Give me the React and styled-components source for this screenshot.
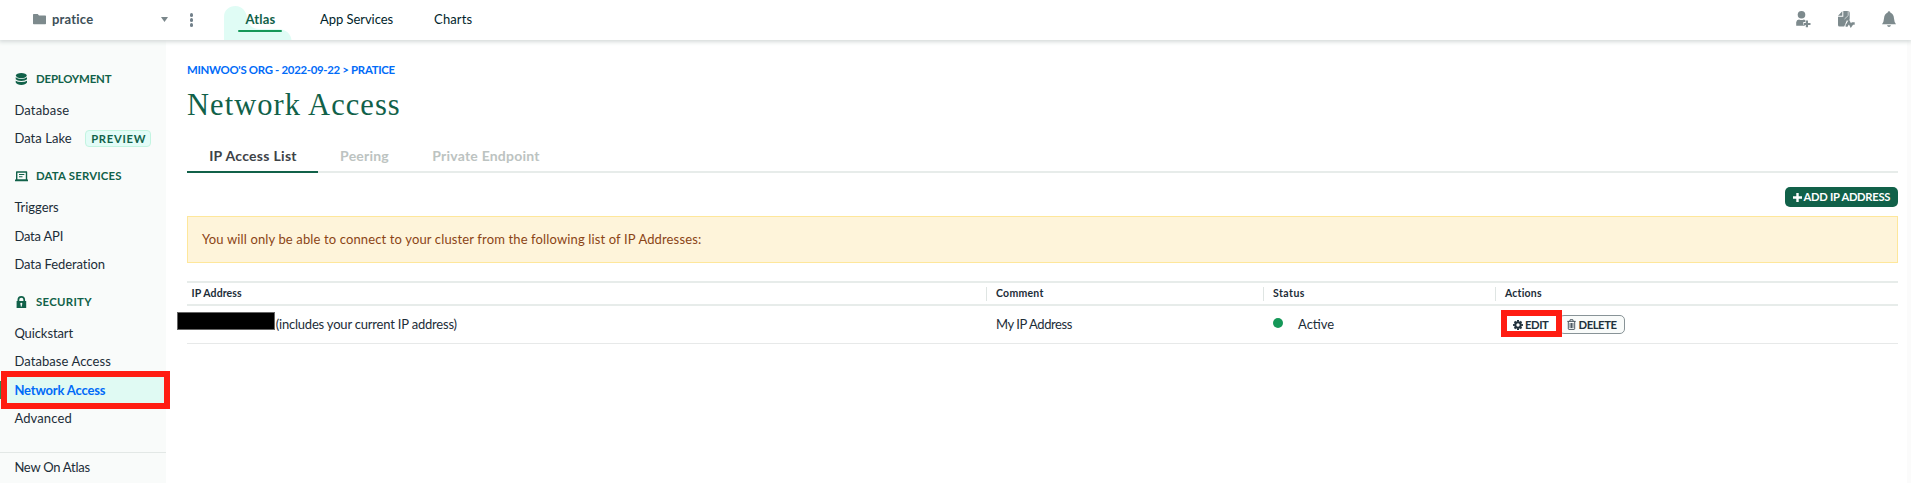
import React from 'react';
import styled, { createGlobalStyle, css } from 'styled-components';

const GlobalStyle = createGlobalStyle`
  *, *::before, *::after { box-sizing: border-box; }
  body { margin: 0; background: #fff; color: #1c2d38; font: 13px/16px Lato, "Open Sans", sans-serif; overflow: hidden; }
  h1 { margin: 0; padding: 0; }
  svg { display: block; flex: none; }
`;

const Label = styled.span`
  letter-spacing: ${({ $track = 0 }) => $track}px;
  white-space: nowrap;
`;

const Page = styled.div`
  height: 483px;
  display: flex;
  flex-direction: column;
  overflow: hidden;
`;

const TopBar = styled.header`
  position: relative;
  z-index: 2;
  display: flex;
  flex: 0 0 40px;
  background: #fff;
  box-shadow: 0 1px 4px 1px #d5dbda;
`;

const ProjectPicker = styled.div`
  display: flex;
  align-items: center;
  width: 168px;
  height: 38px;
  padding-left: 33px;
  color: #3d4f58;
  font-weight: 700;
`;

const ProjectName = styled(Label)`
  margin-left: 6px;
  flex: 1;
`;

const MoreMenu = styled.div`
  display: flex;
  flex-direction: column;
  gap: 1.5px;
  width: 56px;
  padding: 13px 0 0 21.5px;
`;

const MoreDot = styled.i`
  width: 3.5px;
  height: 3.5px;
  border-radius: 50%;
  background: #72808a;
`;

const ProductNav = styled.nav`
  display: flex;
  flex: 1;
`;

const Product = styled.a`
  position: relative;
  display: flex;
  align-items: center;
  height: 38px;
  margin-left: ${({ $gap }) => $gap}px;
  color: #001e2b;
  ${({ $active }) => $active && css`
    width: 67px;
    height: 40px;
    padding: 0 0 2px 21.5px;
    color: #116149;
    font-weight: 700;
    &::after {
      content: '';
      position: absolute;
      left: 14px;
      bottom: 8px;
      width: 44px;
      height: 2px;
      border-radius: 1px;
      background: #159858;
    }
  `}
`;

const ProductShape = styled.svg`
  position: absolute;
  left: 0;
  top: 6px;
`;

const ProductLabel = styled(Label)`
  position: relative;
`;

const Tools = styled.div`
  display: flex;
  padding: 11px 15px 0 0;
  gap: 27px;
`;

const Body = styled.div`
  display: flex;
  flex: 1;
  min-height: 0;
`;

const Sidebar = styled.aside`
  display: flex;
  flex-direction: column;
  flex: 0 0 166px;
  padding-top: 23.6px;
  background: #f9fbfa;
`;

const Section = styled.section`
  margin-bottom: 9px;
`;

const SectionTitle = styled.div`
  display: flex;
  align-items: center;
  height: 31.6px;
  padding: 0 0 1px 15px;
  color: #116149;
  font-size: 11.4px;
  font-weight: 700;
`;

const SectionIcon = styled.span`
  width: 21px;
`;

const SideLink = styled.a`
  position: relative;
  display: flex;
  align-items: center;
  height: 28.4px;
  padding: 1px 0 0 14.4px;
  ${({ $active }) => $active && css`
    color: #016bf8;
    font-weight: 700;
    &::before {
      content: '';
      position: absolute;
      left: 0;
      top: 6px;
      width: 3px;
      height: 18px;
      background: #2c8b50;
    }
  `}
`;

const SideLabel = styled(Label)`
  position: relative;
  z-index: 2;
`;

const SideMark = styled.span`
  position: absolute;
  left: 1px;
  top: -4px;
  width: 168.5px;
  height: 38px;
  border: 6.5px solid #ff1d12;
  background: #e0faf3;
  z-index: 1;
`;

const Preview = styled(Label)`
  margin-left: 13.6px;
  width: 66px;
  height: 17px;
  padding-left: 1px;
  border: 1px solid #c3f4e1;
  border-radius: 4px;
  background: #e3fcf7;
  color: #116149;
  font-size: 11.2px;
  font-weight: 700;
  line-height: 15px;
  text-align: center;
`;

const SideFooter = styled.div`
  margin-top: 10.8px;
  border-top: 1px solid #e3e8e6;
`;

const Main = styled.main`
  flex: 1;
  padding: 22px 9px 0 21px;
  border-right: 4px solid #fbfbfb;
`;

const Breadcrumb = styled.div`
  height: 16px;
  color: #016bf8;
  font-size: 11.4px;
  font-weight: 700;
`;

const Title = styled.h1`
  height: 67px;
  padding-top: 9px;
  color: #116149;
  font: 400 30.5px/36px "Liberation Serif", serif;
`;

const Tabs = styled.div`
  display: flex;
  height: 28px;
  border-bottom: 2px solid #e7ecea;
`;

const Tab = styled.a`
  display: flex;
  justify-content: center;
  width: ${({ $width }) => $width}px;
  height: 28px;
  padding: 3px 0 0 1px;
  font-size: 14px;
  font-weight: 700;
  color: ${({ $active }) => ($active ? '#3d4247' : '#bcc3c1')};
  border-bottom: 2px solid ${({ $active }) => ($active ? '#116149' : 'transparent')};
`;

const ActionBar = styled.div`
  display: flex;
  justify-content: flex-end;
  height: 43px;
  padding-top: 14px;
`;

const AddButton = styled.button`
  display: flex;
  align-items: center;
  gap: 2px;
  width: 113px;
  height: 20px;
  padding: 0 0 0 7.5px;
  border: 0;
  border-radius: 5px;
  background: #116149;
  color: #fff;
  font: 700 11.2px/16px Lato, sans-serif;
`;

const Banner = styled.div`
  display: flex;
  align-items: center;
  height: 47px;
  padding: 0 0 2px 14px;
  border: 1px solid #fee79b;
  background: #fef4da;
  color: #8b4416;
`;

const AccessTable = styled.div`
  margin-top: 18px;
`;

const Row = styled.div`
  display: grid;
  grid-template-columns: 799px 277px 232px 1fr;
`;

const HeadRow = styled(Row)`
  height: 25px;
  align-items: center;
  border: 2px solid #e7ecea;
  border-width: 2px 0;
  font-size: 10.5px;
  font-weight: 700;
`;

const HeadCell = styled.div`
  height: 14px;
  line-height: 13px;
  padding-left: ${({ $first }) => ($first ? 4.5 : 9)}px;
  border-left: ${({ $first }) => ($first ? 0 : '1px solid #dfe5e3')};
`;

const DataRow = styled(Row)`
  height: 38px;
  border-bottom: 1px solid #e7e9e9;
`;

const Cell = styled.div`
  position: relative;
  display: flex;
  align-items: center;
  padding: 0 0 2px 10px;
`;

const IpCell = styled(Cell)`
  padding-left: 0;
`;

const Redaction = styled.span`
  width: 98px;
  height: 18px;
  margin: 0 1px 5px -10.3px;
  border: 1px solid #666;
  background: #000;
`;

const StatusDot = styled.i`
  width: 10px;
  height: 10px;
  margin: 0 15px 1px 0;
  border-radius: 50%;
  background: #159858;
`;

const RowButton = styled.button`
  display: flex;
  align-items: center;
  gap: 2.5px;
  width: ${({ $width }) => $width}px;
  height: 19px;
  margin: 2px 0 0 ${({ $pull = 0 }) => $pull}px;
  padding: 0 0 0 ${({ $inset }) => $inset}px;
  border: 1px solid #889397;
  border-radius: 5px;
  background: #f9fbfa;
  color: #21313c;
  font: 700 11.3px/16px Lato, sans-serif;
`;

const EditButton = styled(RowButton)`
  border-color: transparent;
  background: #fff;
`;

const EditMark = styled.span`
  position: absolute;
  left: 6px;
  top: 4px;
  width: 60.5px;
  height: 27px;
  border: 6.5px solid #ff1d12;
`;

const Svg = ({ w, h, children }) => (
  <svg width={w} height={h} viewBox={`0 0 ${w} ${h}`} fill="currentColor">{children}</svg>
);

const Folder = () => <Svg w={13} h={12}><path d="M0 1.7Q0 1 .7 1H4.7L6 2.5H12.3Q13 2.5 13 3.2V10.6Q13 11.2 12.3 11.2H.7Q0 11.2 0 10.6Z" fill="#7d8a8d" /></Svg>;
const Caret = () => <Svg w={7} h={5}><path d="M0 0H7L3.5 5Z" fill="#7a878b" /></Svg>;

const Stack = () => (
  <Svg w={13} h={12}>
    <ellipse cx="6.3" cy="2.6" rx="5.4" ry="2.6" />
    <path d="M.7 4.2Q2.5 5.9 6.3 5.9T12 4.2V6.2Q10.5 8 6.3 8T.7 6.2Z" />
    <path d="M.7 7.8Q2.5 9.1 6.3 9.1T12 7.8V9.6Q10.5 12 6.3 12T.7 9.6Z" />
  </Svg>
);

const Laptop = () => (
  <Svg w={13} h={11}>
    <path fillRule="evenodd" d="M1 1Q1 .3 1.7.3H11.5Q12.2.3 12.2 1V8.6H13V10.2H0V8.6H1ZM2.4 1.7V8.3H10.8V1.7Z" />
    <path d="M4 3H9.3V4.1H4ZM4 5.2H7.5V6.2H4Z" />
  </Svg>
);

const Lock = () => (
  <Svg w={13} h={12}>
    <path fillRule="evenodd" d="M2.5 5V3.8a3.8 3.8 0 0 1 7.6 0V5H11.2V12H1.6V5ZM4.3 5H8.4V3.8a2.05 2.05 0 0 0-4.1 0ZM6.3 6.8a1.1 1.1 0 0 0-.6 2V10.4H6.9V8.8a1.1 1.1 0 0 0-.6-2Z" />
  </Svg>
);

const InviteUser = () => (
  <Svg w={15} h={17}>
    <g fill="#7d8a8d">
      <circle cx="5.5" cy="3.8" r="3.8" />
      <path d="M.2 14.7V11.2Q.5 8.6 3 8.5Q5.5 9.6 8 8.5L9.3 9.2V11H7.3V13.8H8.8V14.7Z" />
      <path d="M9.8 9.4H12V12H14.5V14H12V16.3H9.8V14H7.9V12H9.8Z" />
    </g>
  </Svg>
);

const Activity = () => (
  <Svg w={17} h={17}>
    <g fill="#7d8a8d">
      <path d="M0 4.7L4.3.2V4.7Z" />
      <path d="M5.3 0H10Q11.7 0 11.7 1.7V8.2L10.2 10L8.9 9.2L6.2 15.6H1.5Q0 15.6 0 14V5.8H5.3Z" />
      <path d="M10.2.3V4.6L6.5 8" fill="none" stroke="#fff" strokeWidth=".6" />
      <path d="M7.6 14.5H8.8L10.9 10.8L12.9 14.7L14.4 12.5H16.7" fill="none" stroke="#7d8a8d" strokeWidth="2.4" />
    </g>
  </Svg>
);

const Bell = () => (
  <Svg w={14} h={17}>
    <path d="M5.7 1.5a1.3 1.3 0 0 1 2.6 0Q11.8 3 12 7.5Q12.2 11 14 13.2H0Q1.8 11 2 7.5Q2.2 3 5.7 1.5ZM5 14.2H9Q8.5 16 7 16T5 14.2Z" fill="#7d8a8d" />
  </Svg>
);

const Plus = () => <Svg w={9} h={9}><path d="M3.3 0H5.7V3.3H9V5.7H5.7V9H3.3V5.7H0V3.3H3.3Z" /></Svg>;

const Gear = () => (
  <svg width="10" height="10" viewBox="-5 -5 10 10">
    <circle r="2.7" fill="none" stroke="currentColor" strokeWidth="2" />
    {[0, 45, 90, 135].map((a) => (
      <path key={a} d="M-1-4.9H1V-3.2H-1ZM-1 4.9H1V3.2H-1Z" fill="currentColor" transform={`rotate(${a})`} />
    ))}
  </svg>
);

const Trash = () => (
  <svg width="9" height="11" viewBox="0 0 9 11" fill="none" stroke="currentColor" strokeWidth=".8">
    <path d="M.3 2.4H8.7M2.8 2.2L3.2.7H5.8L6.2 2.2M1.3 2.6V9.6Q1.3 10.4 2 10.4H7Q7.7 10.4 7.7 9.6V2.6M3.1 4V9M4.5 4V9M5.9 4V9" />
  </svg>
);

const sections = [
  { title: 'DEPLOYMENT', track: -0.15, icon: <Stack />, links: [['Database', 0.18], ['Data Lake', 0.05, 'preview']] },
  { title: 'DATA SERVICES', track: 0.18, icon: <Laptop />, links: [['Triggers', -0.05], ['Data API', -0.2], ['Data Federation', -0.08]] },
  { title: 'SECURITY', track: 0.3, icon: <Lock />, links: [['Quickstart', -0.1], ['Database Access', 0.08], ['Network Access', -0.17, 'active'], ['Advanced', 0.12]] },
];

export default function App() {
  return (
    <Page>
      <GlobalStyle />
      <TopBar>
        <ProjectPicker>
          <Folder />
          <ProjectName $track={0.2}>pratice</ProjectName>
          <Caret />
        </ProjectPicker>
        <MoreMenu><MoreDot /><MoreDot /><MoreDot /></MoreMenu>
        <ProductNav>
          <Product $active $gap={0}>
            <ProductShape width="68" height="34" viewBox="0 0 68 34">
              <path d="M0 34V11C0 4 5 0 11.5 0S22 5 23 11C24 19 28 23 36 23H54C62 23 67 28 67.5 34Z" fill="#e0fcf5" />
            </ProductShape>
            <ProductLabel $track={0.2}>Atlas</ProductLabel>
          </Product>
          <Product $gap={29}><Label $track={-0.05}>App Services</Label></Product>
          <Product $gap={41}><Label $track={0.1}>Charts</Label></Product>
        </ProductNav>
        <Tools><InviteUser /><Activity /><Bell /></Tools>
      </TopBar>
      <Body>
        <Sidebar>
          {sections.map(({ title, track, icon, links }) => (
            <Section key={title}>
              <SectionTitle><SectionIcon>{icon}</SectionIcon><Label $track={track}>{title}</Label></SectionTitle>
              {links.map(([name, spacing, kind]) => (
                <SideLink key={name} $active={kind === 'active'}>
                  {kind === 'active' && <SideMark />}
                  <SideLabel $track={spacing}>{name}</SideLabel>
                  {kind === 'preview' && <Preview $track={0.75}>PREVIEW</Preview>}
                </SideLink>
              ))}
            </Section>
          ))}
          <SideFooter><SideLink><Label $track={-0.25}>New On Atlas</Label></SideLink></SideFooter>
        </Sidebar>
        <Main>
          <Breadcrumb><Label $track={-0.3}>MINWOO'S ORG - 2022-09-22 &gt; PRATICE</Label></Breadcrumb>
          <Title><Label $track={1.05}>Network Access</Label></Title>
          <Tabs>
            <Tab $active $width={131}><Label $track={0.3}>IP Access List</Label></Tab>
            <Tab $width={92}><Label $track={0.2}>Peering</Label></Tab>
            <Tab $width={151}><Label $track={0.22}>Private Endpoint</Label></Tab>
          </Tabs>
          <ActionBar><AddButton><Plus /><Label $track={-0.27}>ADD IP ADDRESS</Label></AddButton></ActionBar>
          <Banner><Label $track={0.135}>You will only be able to connect to your cluster from the following list of IP Addresses:</Label></Banner>
          <AccessTable>
            <HeadRow>
              <HeadCell $first><Label $track={0.1}>IP Address</Label></HeadCell>
              <HeadCell><Label $track={0.26}>Comment</Label></HeadCell>
              <HeadCell><Label $track={0.45}>Status</Label></HeadCell>
              <HeadCell><Label $track={0.2}>Actions</Label></HeadCell>
            </HeadRow>
            <DataRow>
              <IpCell><Redaction /><Label $track={-0.2}>(includes your current IP address)</Label></IpCell>
              <Cell><Label $track={-0.42}>My IP Address</Label></Cell>
              <Cell><StatusDot /><Label>Active</Label></Cell>
              <Cell>
                <EditButton $width={50} $inset={6.5}><Gear /><Label $track={-0.45}>EDIT</Label></EditButton>
                <RowButton $width={66} $inset={7.5} $pull={3.5}><Trash /><Label $track={-0.45}>DELETE</Label></RowButton>
                <EditMark />
              </Cell>
            </DataRow>
          </AccessTable>
        </Main>
      </Body>
    </Page>
  );
}
